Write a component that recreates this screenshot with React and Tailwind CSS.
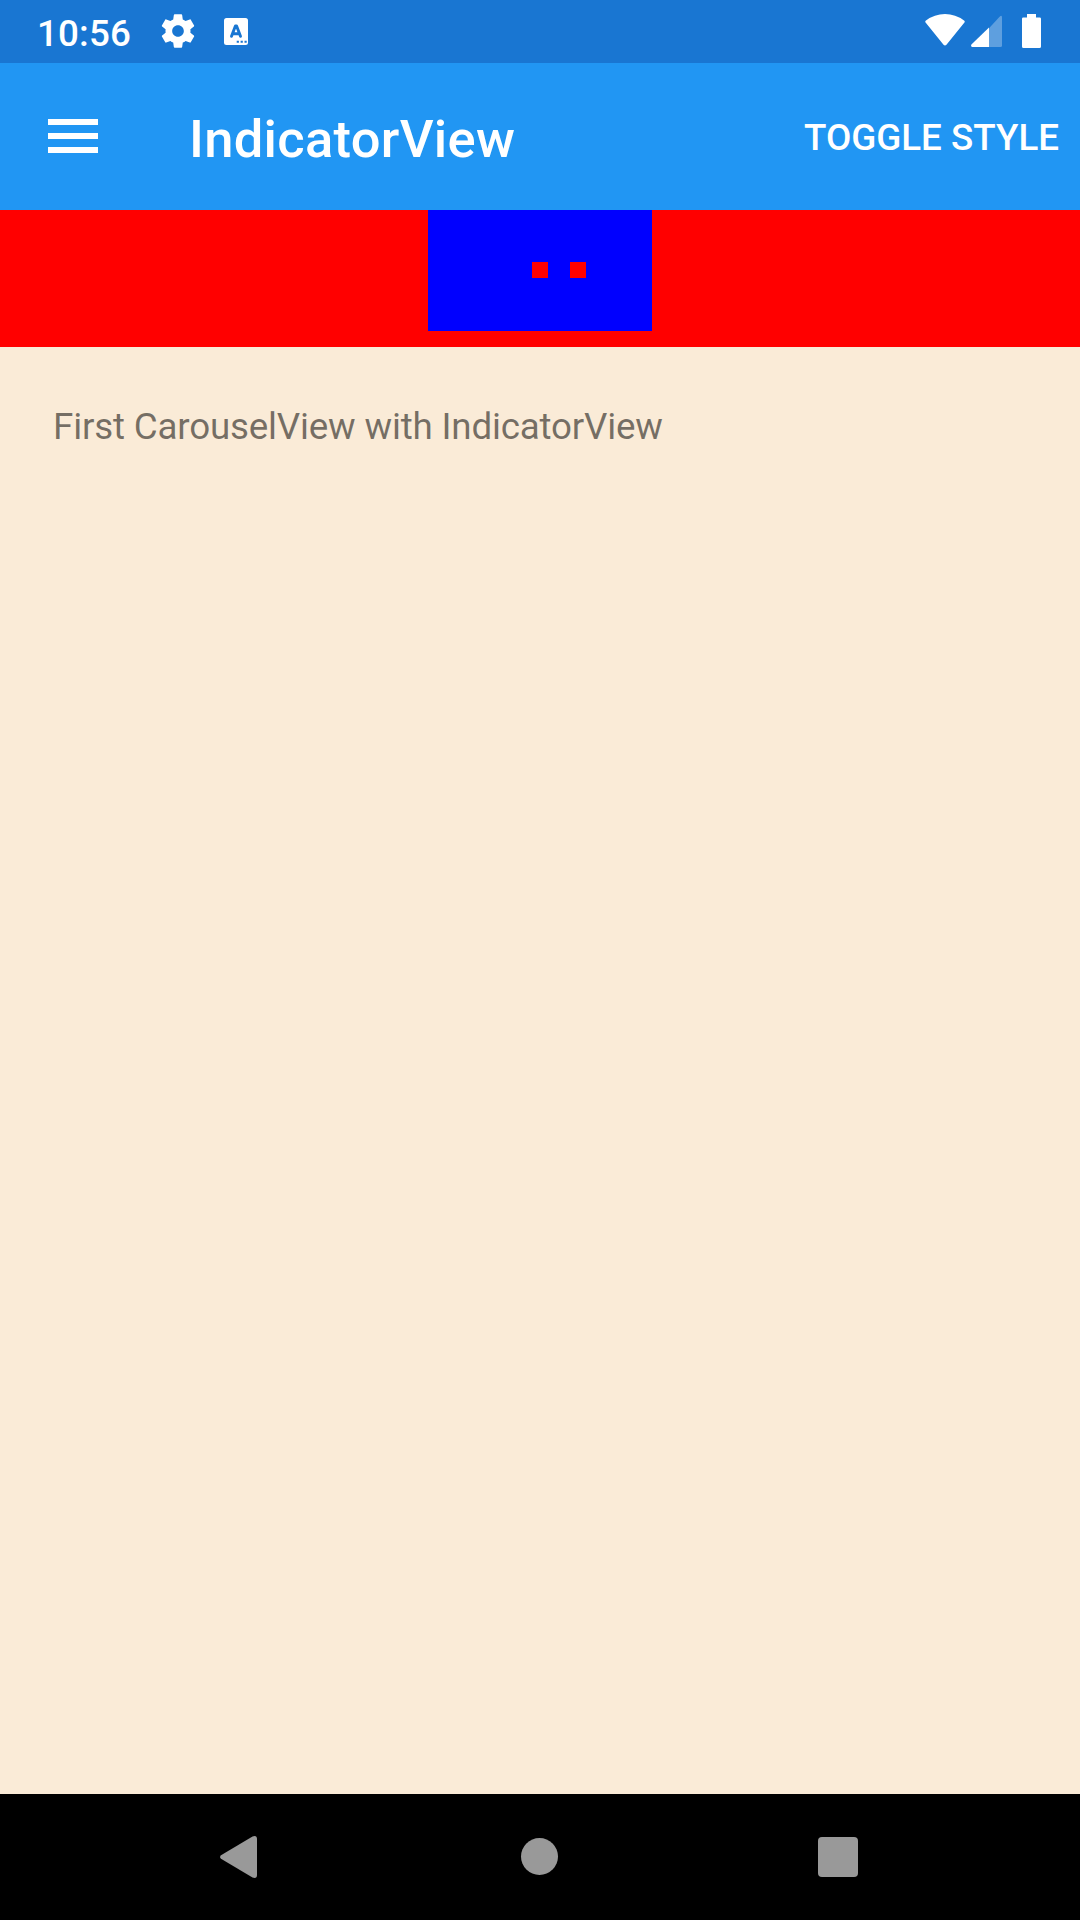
function StatusBar() {
  return (
    <div className="flex h-[63px] items-start bg-[#1976d2] text-white">
      <span className="ml-[37px] w-[125px] pt-[2px] text-[36.75px] leading-[63px] font-medium tracking-[0.15px]">10:56</span>
      <svg className="mt-[11px] -ml-[4px] h-[40px] w-[40px] shrink-0" viewBox="0 0 24 24" fill="currentColor">
        <path d="M19.43 12.98c.04-.32.07-.64.07-.98s-.03-.66-.07-.98l2.11-1.65c.19-.15.24-.42.12-.64l-2-3.46c-.12-.22-.39-.3-.61-.22l-2.49 1c-.52-.4-1.08-.73-1.69-.98l-.38-2.65C14.46 2.18 14.25 2 14 2h-4c-.25 0-.46.18-.49.42l-.38 2.65c-.61.25-1.17.59-1.69.98l-2.49-1c-.23-.09-.49 0-.61.22l-2 3.46c-.13.22-.07.49.12.64l2.11 1.65c-.04.32-.07.65-.07.98s.03.66.07.98l-2.11 1.65c-.19.15-.24.42-.12.64l2 3.46c.12.22.39.3.61.22l2.49-1c.52.4 1.08.73 1.69.98l.38 2.65c.03.24.24.42.49.42h4c.25 0 .46-.18.49-.42l.38-2.65c.61-.25 1.17-.59 1.69-.98l2.49 1c.23.09.49 0 .61-.22l2-3.46c.12-.22.07-.49-.12-.64l-2.11-1.65zM12 15.5c-1.93 0-3.5-1.57-3.5-3.5s1.57-3.5 3.5-3.5 3.5 1.57 3.5 3.5-1.57 3.5-3.5 3.5z" />
      </svg>
      <svg className="mt-[18px] ml-[26px] h-[27px] w-[24px] shrink-0" viewBox="0 0 24 27">
        <rect width="24" height="27" rx="2.5" fill="#fff" />
        <path d="M7.5 18.3 L11.400 7.900 H12.600 L16.500 18.300 M9 15.700 H15" fill="none" stroke="#1976d2" strokeWidth="2.9" strokeLinecap="round" strokeLinejoin="round" />
        <path d="M12.700 22.800h2.200v2h-2.200zM16.600 22.800h2.200v2h-2.200zM20.500 22.800h2.200v2h-2.200z" fill="#1976d2" />
      </svg>
      <svg className="mt-[14px] ml-auto h-[32px] w-[40px] shrink-0" viewBox="0 0 41 32" preserveAspectRatio="none" fill="currentColor">
        <path d="M.8 8.8Q-.4 7.6 1 6.5Q9.700 0 20.500 0Q31.300 0 40 6.500Q41.400 7.600 40.200 8.800L22 30.700Q20.500 32.300 19 30.700Z" />
      </svg>
      <svg className="mt-[15px] ml-[6px] h-[32px] w-[31px] shrink-0" viewBox="0 0 31 32" fill="currentColor">
        <path d="M18 13.200L28.600 1.700Q31 -.6 31 2.500V30.500Q31 32 29.500 32H18Z" opacity=".3" />
        <path d="M18 12.400V32H1.200Q-.6 31.500 .4 29.600Z" />
      </svg>
      <svg className="mt-[14px] mr-[39px] ml-[20px] h-[34px] w-[19px] shrink-0" viewBox="0 0 19 34" fill="currentColor">
        <path d="M5 0H14V3.500H17.700Q19 3.500 19 4.800V32.500Q19 34 17.500 34H1.500Q0 34 0 32.500V4.800Q0 3.500 1.300 3.500H5Z" />
      </svg>
    </div>
  );
}

function AppBar() {
  return (
    <header className="flex h-[147px] items-start bg-[#2196f3] text-white">
      <button className="mt-[56px] ml-[48px] flex w-[50px] flex-col gap-[8.5px]" aria-label="Menu">
        <span className="h-[5.5px] w-full bg-white" />
        <span className="h-[5.5px] w-full bg-white" />
        <span className="h-[5.5px] w-full bg-white" />
      </button>
      <h1 className="ml-[91px] pt-[3px] text-[52.5px] leading-[147px] font-medium tracking-[0.3px]">IndicatorView</h1>
      <button className="mr-[21px] ml-auto pt-px text-[36.75px] leading-[147px] font-medium">TOGGLE STYLE</button>
    </header>
  );
}

function Indicators() {
  return (
    <div className="flex h-[137px] justify-center bg-[#ff0000]">
      <div className="flex h-[121px] w-[224px] gap-[22px] bg-[#0000ff] pt-[52px] pl-[104px]">
        <span className="h-4 w-4 bg-[#ff0000]" />
        <span className="h-4 w-4 bg-[#ff0000]" />
      </div>
    </div>
  );
}

function NavigationBar() {
  return (
    <nav className="flex h-[126px] items-start bg-black text-[#999999]">
      <svg className="mt-[42px] ml-[220px] h-[42px] w-[37px] shrink-0" viewBox="0 0 37 42" fill="currentColor">
        <path d="M1 19.200L32.500 .5Q37 -1 37 3V39Q37 43 32.500 41.500L1 22.800Q-.9 21 1 19.200Z" />
      </svg>
      <span className="mt-[44px] ml-[264px] h-[37px] w-[37px] rounded-full bg-[#999999]" />
      <span className="mt-[43px] ml-[260px] h-[40px] w-[40px] rounded-[4px] bg-[#999999]" />
    </nav>
  );
}

export default function App() {
  return (
    <div className="flex h-[1920px] w-[1080px] flex-col overflow-hidden bg-[#faebd7] font-[Roboto,sans-serif]">
      <StatusBar />
      <AppBar />
      <Indicators />
      <main className="flex-1 px-[53px] pt-[58px]">
        <p className="text-[36.75px] leading-[43px] tracking-[-0.185px] text-black/54">First CarouselView with IndicatorView</p>
      </main>
      <NavigationBar />
    </div>
  );
}
